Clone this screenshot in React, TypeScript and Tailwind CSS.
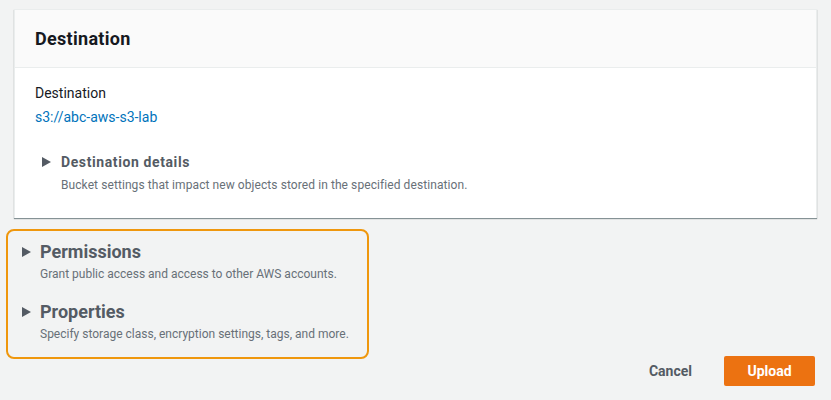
import React from "react";

const Caret = ({ className }: { className?: string }) => (
  <svg className={className} width="9" height="10" viewBox="0 0 9 10">
    <path d="M0 0 L9 5 L0 10 Z" fill="#545b64" />
  </svg>
);

export default function App() {
  return (
    <div
      className="w-[831px] h-[400px] bg-[#f2f3f3] px-[6px] pt-[9px] overflow-hidden"
      style={{ fontFamily: "Roboto, 'Open Sans', Arial, sans-serif" }}
    >
      <div className="mx-[8px] bg-white border-t border-x border-[#eaeded] shadow-[0_1px_1px_0_rgba(0,28,36,0.45)]">
        <div className="h-[58px] px-[20px] flex items-center bg-[#fafafa] border-b border-[#eaeded]">
          <h2 className="text-[18px] font-bold text-[#16191f] leading-[24px] tracking-[0.3px]">Destination</h2>
        </div>
        <div className="px-[20px] pt-[14px] pb-[25px]">
          <div className="text-[14px] leading-[22px] text-[#16191f]">Destination</div>
          <div className="mt-[2px] text-[14px] leading-[22px] text-[#0073bb]">s3://abc-aws-s3-lab</div>
          <div className="mt-[23px] pl-[7px]">
            <div className="flex items-center gap-[10px]">
              <Caret />
              <span className="text-[14px] leading-[22px] font-bold text-[#545b64] tracking-[0.6px]">Destination details</span>
            </div>
            <div className="pl-[19px] mt-[4px] text-[12px] leading-[16px] text-[#687078] tracking-[0.08px]">
              Bucket settings that impact new objects stored in the specified destination.
            </div>
          </div>
        </div>
      </div>

      <div className="mt-[11px] w-[363px] border-2 border-[#ef970d] rounded-[8px] pl-[14px] pt-[9px] pb-[15px]">
        <div className="flex items-center gap-[9px]">
          <Caret />
          <span className="text-[18px] leading-[24px] font-bold text-[#545b64]">Permissions</span>
        </div>
        <div className="pl-[18px] mt-[2px] text-[12px] leading-[16px] text-[#687078]">
          Grant public access and access to other AWS accounts.
        </div>
        <div className="mt-[18px] flex items-center gap-[9px]">
          <Caret />
          <span className="text-[18px] leading-[24px] font-bold text-[#545b64]">Properties</span>
        </div>
        <div className="pl-[18px] mt-[2px] text-[12px] leading-[16px] text-[#687078]">
          Specify storage class, encryption settings, tags, and more.
        </div>
      </div>

      <div className="-mt-[3px] mr-[10px] flex justify-end items-center gap-[12px]">
        <button className="h-[30px] px-[20px] text-[14px] font-bold text-[#545b64]">Cancel</button>
        <button className="h-[30px] w-[91px] rounded-[2px] bg-[#ec7211] text-[14px] font-bold text-white">
          Upload
        </button>
      </div>
    </div>
  );
}
